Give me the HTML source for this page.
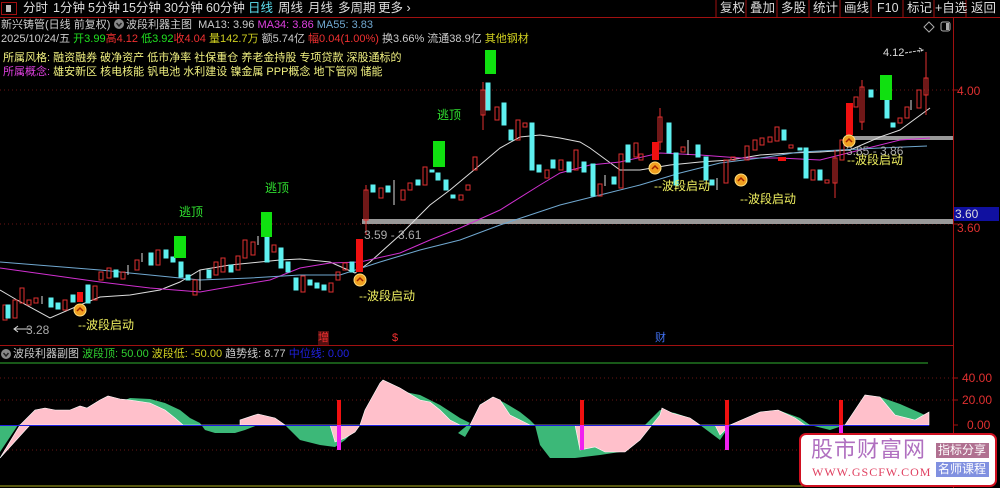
<!DOCTYPE html>
<html><head><meta charset="utf-8"><style>
body{margin:0;background:#000;width:1000px;height:488px;overflow:hidden;font-family:"Liberation Sans","Noto Sans CJK SC",sans-serif;}
svg{position:absolute;left:0;top:0}
.t{position:absolute;white-space:nowrap;font-size:12px;line-height:14px}
.s{font-size:11px}
.tb{position:absolute;top:0;height:17px;font-size:12.5px;color:#ddd;line-height:17px}
</style></head><body>
<svg width="1000" height="488" viewBox="0 0 1000 488">
<line x1="0" y1="17.5" x2="1000" y2="17.5" stroke="#a01010"/>
<line x1="953.5" y1="17" x2="953.5" y2="488" stroke="#a01010"/>
<line x1="0" y1="345.5" x2="953" y2="345.5" stroke="#a01010"/>
<g stroke="#a01010" fill="none">
<rect x="1.5" y="2.5" width="15" height="12"/>
<line x1="716" y1="0" x2="716" y2="17"/><line x1="746" y1="0" x2="746" y2="17"/><line x1="777" y1="0" x2="777" y2="17"/><line x1="809" y1="0" x2="809" y2="17"/><line x1="840" y1="0" x2="840" y2="17"/><line x1="871" y1="0" x2="871" y2="17"/><line x1="903" y1="0" x2="903" y2="17"/><line x1="934" y1="0" x2="934" y2="17"/><line x1="966" y1="0" x2="966" y2="17"/>
</g>
<rect x="6" y="5" width="5" height="7" fill="#bbb"/>
<path d="M929 22 L934 27 L929 32 L924 27 Z" stroke="#aaa" fill="none"/>
<rect x="941" y="22" width="9" height="9" rx="2" stroke="#aaa" fill="none"/><rect x="946" y="23" width="3" height="7" fill="#aaa"/>
<g stroke="#6a1515" stroke-dasharray="1,3">
<line x1="0" y1="90" x2="953" y2="90"/><line x1="0" y1="224" x2="953" y2="224"/>
<line x1="0" y1="378" x2="953" y2="378"/><line x1="0" y1="400" x2="953" y2="400"/><line x1="0" y1="450" x2="953" y2="450"/>
</g>
<g stroke="#a01010"><line x1="953" y1="90" x2="958" y2="90"/><line x1="953" y1="224" x2="958" y2="224"/><line x1="953" y1="378" x2="958" y2="378"/><line x1="953" y1="400" x2="958" y2="400"/><line x1="953" y1="425" x2="958" y2="425"/></g>
<rect x="954" y="207" width="45" height="14" fill="#1010a0"/>
<rect x="362" y="219" width="591" height="5" fill="#999"/>
<rect x="848" y="136" width="105" height="4" fill="#999"/>
<polyline fill="none" stroke="#ddd" stroke-width="1" points="0,290 17,300 50,318 80,305 100,297 130,295 160,290 180,282 200,270 230,265 260,262 280,260 300,259 330,262 355,273 370,262 400,235 430,205 450,190 480,165 500,148 520,137 540,135 560,138 580,142 590,148 620,170 640,170 670,165 700,162 730,160 760,155 790,153 820,152 850,150 880,137 900,130 930,108"/>
<polyline fill="none" stroke="#d030d0" stroke-width="1" points="0,268 50,275 100,282 150,288 200,292 240,285 270,280 300,268 330,263 360,262 400,253 430,240 460,228 500,210 540,185 560,173 590,165 620,162 660,153 700,155 740,158 780,158 820,160 860,150 900,140 930,138"/>
<polyline fill="none" stroke="#70a8d0" stroke-width="1" points="0,262 50,266 100,270 150,275 200,280 250,278 300,275 340,275 380,262 420,250 460,240 500,225 530,215 560,205 600,195 640,185 680,173 720,163 760,158 800,152 840,150 880,148 927,146"/>
<g stroke="#e03030" fill="none" stroke-width="1">
<rect x="3" y="305" width="4" height="15"/><rect x="13" y="300" width="4" height="18"/><rect x="20" y="288" width="4" height="15"/><rect x="27" y="300" width="4" height="5"/><rect x="34" y="298" width="4" height="5"/><rect x="63" y="300" width="4" height="10"/><rect x="93" y="286" width="4" height="14"/><rect x="99" y="272" width="4" height="8"/><rect x="107" y="268" width="4" height="10"/><rect x="121" y="272" width="4" height="7"/><rect x="135" y="260" width="4" height="10"/><rect x="156" y="250" width="4" height="15"/><rect x="193" y="280" width="4" height="15"/><rect x="214" y="262" width="4" height="13"/><rect x="221" y="258" width="4" height="14"/><rect x="236" y="256" width="4" height="14"/><rect x="243" y="240" width="4" height="18"/><rect x="251" y="242" width="4" height="13"/><rect x="272" y="245" width="4" height="7"/><rect x="301" y="276" width="4" height="16"/><rect x="329" y="283" width="4" height="9"/><rect x="336" y="272" width="4" height="8"/><rect x="343" y="263" width="4" height="7"/><rect x="364" y="190" width="4" height="30"/><rect x="379" y="188" width="4" height="10"/><rect x="401" y="190" width="4" height="10"/><rect x="408" y="183" width="4" height="7"/><rect x="423" y="167" width="4" height="18"/><rect x="459" y="195" width="4" height="5"/><rect x="466" y="185" width="4" height="5"/><rect x="473" y="157" width="4" height="13"/><rect x="481" y="90" width="4" height="25"/><rect x="495" y="107" width="4" height="13"/><rect x="516" y="120" width="4" height="20"/><rect x="523" y="123" width="4" height="4"/><rect x="545" y="170" width="4" height="8"/><rect x="559" y="160" width="4" height="10"/><rect x="574" y="150" width="4" height="20"/><rect x="598" y="184" width="4" height="12"/><rect x="619" y="154" width="4" height="34"/><rect x="634" y="143" width="4" height="14"/><rect x="639" y="154" width="4" height="6"/><rect x="658" y="117" width="4" height="25"/><rect x="681" y="147" width="4" height="5"/><rect x="724" y="160" width="4" height="23"/><rect x="731" y="157" width="4" height="3"/><rect x="745" y="146" width="4" height="14"/><rect x="753" y="140" width="4" height="10"/><rect x="760" y="138" width="4" height="7"/><rect x="768" y="137" width="4" height="5"/><rect x="775" y="127" width="4" height="14"/><rect x="789" y="145" width="4" height="3"/><rect x="811" y="170" width="4" height="10"/><rect x="825" y="180" width="4" height="3"/><rect x="833" y="158" width="4" height="25"/><rect x="840" y="140" width="4" height="20"/><rect x="854" y="97" width="4" height="10"/><rect x="860" y="87" width="4" height="35"/><rect x="898" y="118" width="4" height="5"/><rect x="905" y="107" width="4" height="11"/><rect x="917" y="90" width="4" height="18"/><rect x="924" y="78" width="4" height="17"/>
<line x1="926" y1="52" x2="926" y2="115"/><line x1="862" y1="80" x2="862" y2="130"/><line x1="366" y1="185" x2="366" y2="235"/><line x1="483" y1="82" x2="483" y2="130"/><line x1="660" y1="108" x2="660" y2="150"/><line x1="835" y1="150" x2="835" y2="198"/>
</g>
<g fill="#5ef0f0" stroke="#5ef0f0">
<rect x="6" y="305" width="4" height="13"/><rect x="49" y="298" width="4" height="9"/><rect x="56" y="303" width="4" height="6"/><rect x="71" y="295" width="4" height="7"/><rect x="86" y="285" width="4" height="18"/><rect x="114" y="270" width="4" height="7"/><rect x="149" y="253" width="4" height="12"/><rect x="164" y="250" width="4" height="8"/><rect x="171" y="257" width="4" height="5"/><rect x="179" y="262" width="4" height="15"/><rect x="186" y="275" width="4" height="5"/><rect x="207" y="270" width="4" height="8"/><rect x="229" y="265" width="4" height="7"/><rect x="265" y="237" width="4" height="25"/><rect x="279" y="248" width="4" height="20"/><rect x="286" y="262" width="4" height="10"/><rect x="294" y="278" width="4" height="12"/><rect x="308" y="280" width="4" height="5"/><rect x="315" y="283" width="4" height="5"/><rect x="322" y="285" width="4" height="5"/><rect x="350" y="262" width="4" height="10"/><rect x="371" y="185" width="4" height="7"/><rect x="386" y="186" width="4" height="6"/><rect x="416" y="180" width="4" height="5"/><rect x="430" y="170" width="4" height="2"/><rect x="436" y="173" width="4" height="7"/><rect x="444" y="180" width="4" height="10"/><rect x="451" y="195" width="4" height="3"/><rect x="486" y="83" width="4" height="27"/><rect x="502" y="103" width="4" height="22"/><rect x="509" y="130" width="4" height="10"/><rect x="530" y="123" width="4" height="47"/><rect x="537" y="165" width="4" height="7"/><rect x="551" y="160" width="4" height="8"/><rect x="567" y="162" width="4" height="10"/><rect x="582" y="162" width="4" height="10"/><rect x="591" y="164" width="4" height="32"/><rect x="612" y="177" width="4" height="7"/><rect x="626" y="145" width="4" height="17"/><rect x="667" y="123" width="4" height="30"/><rect x="674" y="153" width="4" height="32"/><rect x="696" y="145" width="4" height="12"/><rect x="704" y="157" width="4" height="23"/><rect x="710" y="180" width="4" height="5"/><rect x="782" y="130" width="4" height="10"/><rect x="798" y="148" width="4" height="2"/><rect x="804" y="148" width="4" height="30"/><rect x="818" y="170" width="4" height="10"/><rect x="869" y="90" width="4" height="7"/><rect x="885" y="100" width="4" height="18"/><rect x="891" y="123" width="4" height="4"/>
</g>
<g stroke="#ddd"><line x1="42" y1="296" x2="42" y2="304"/><line x1="128" y1="265" x2="128" y2="275"/><line x1="142" y1="253" x2="142" y2="262"/><line x1="200" y1="270" x2="200" y2="290"/><line x1="258" y1="236" x2="258" y2="245"/><line x1="394" y1="180" x2="394" y2="205"/><line x1="605" y1="175" x2="605" y2="186"/><line x1="688" y1="140" x2="688" y2="155"/><line x1="717" y1="178" x2="717" y2="190"/><line x1="911" y1="100" x2="911" y2="110"/></g>
<g fill="#10e010"><rect x="174" y="236" width="12" height="22"/><rect x="261" y="212" width="11" height="25"/><rect x="433" y="141" width="12" height="26"/><rect x="485" y="50" width="11" height="24"/><rect x="880" y="75" width="12" height="25"/></g>
<g fill="#f01010"><rect x="77" y="292" width="6" height="10"/><rect x="356" y="239" width="7" height="33"/><rect x="652" y="142" width="7" height="18"/><rect x="778" y="157" width="8" height="4"/><rect x="846" y="103" width="7" height="32"/></g>
<g>
<circle cx="80" cy="310" r="6" fill="#f0a020" stroke="#ffe080"/><circle cx="360" cy="280" r="6" fill="#f0a020" stroke="#ffe080"/><circle cx="655" cy="168" r="6" fill="#f0a020" stroke="#ffe080"/><circle cx="741" cy="180" r="6" fill="#f0a020" stroke="#ffe080"/><circle cx="849" cy="141" r="6" fill="#f0a020" stroke="#ffe080"/>
</g>
<g stroke="#a02000" stroke-width="1.5" fill="none"><path d="M77 311 L80 308 L83 311"/><path d="M357 281 L360 278 L363 281"/><path d="M652 169 L655 166 L658 169"/><path d="M738 181 L741 178 L744 181"/><path d="M846 142 L849 139 L852 142"/></g>
<path d="M905 53 L923 50 M919 48 L923 50 L919 52" stroke="#ddd" fill="none" stroke-dasharray="3,1"/>
<path d="M15 329 L30 329 M18 326 L14 329 L18 332" stroke="#ddd" fill="none"/>
<line x1="0" y1="363" x2="928" y2="363" stroke="#30b030"/>
<line x1="0" y1="486" x2="953" y2="486" stroke="#b0b020"/>
<polygon fill="#3cb878" points="0,425 0,452 18,425 125,400 130,398 150,399 165,403 180,410 190,418 200,423 205,430 215,433 235,433 245,430 258,425 285,425 290,430 300,440 320,445 335,447 345,440 360,425 383,380 400,388 405,392 420,395 440,405 460,418 470,423 458,433 465,437 472,425 480,405 493,397 505,403 520,412 530,420 535,425 540,445 550,458 575,458 600,455 620,452 640,430 660,410 675,413 690,418 700,425 720,440 730,425 760,412 778,410 800,418 810,425 830,430 845,425 865,395 880,397 900,404 925,415 929,413 929,425"/>
<polygon fill="#ffc0cb" stroke="#fff" stroke-width="0.6" points="0,458 20,425 35,410 45,408 55,410 70,410 80,406 87,408 100,400 108,396 120,399 130,400 150,403 165,410 175,418 183,425 240,425 240,420 258,414 275,418 285,425 330,425 335,442 345,438 355,432 360,425 365,410 380,383 383,380 400,388 420,400 430,402 440,410 450,420 460,425 470,425 480,405 493,397 500,400 510,415 520,420 530,425 575,425 580,450 595,447 605,452 625,452 640,440 660,415 662,408 672,413 690,418 700,425 715,425 720,435 730,425 760,412 778,410 795,418 805,425 845,425 865,395 880,397 895,415 915,420 929,412 929,425 30,425"/>
<line x1="0" y1="425.5" x2="929" y2="425.5" stroke="#2020e0"/>
<g><rect x="337" y="400" width="4" height="25" fill="#f01010"/><rect x="337" y="425" width="4" height="25" fill="#f020f0"/>
<rect x="580" y="400" width="4" height="25" fill="#f01010"/><rect x="580" y="425" width="4" height="25" fill="#f020f0"/>
<rect x="725" y="400" width="4" height="25" fill="#f01010"/><rect x="725" y="425" width="4" height="25" fill="#f020f0"/>
<rect x="839" y="400" width="4" height="25" fill="#f01010"/><rect x="839" y="425" width="4" height="8" fill="#f020f0"/></g>
<circle cx="6" cy="354" r="5" fill="#888"/><path d="M3.5 353 L6 356 L8.5 353" stroke="#222" fill="none" stroke-width="1.5"/>
<circle cx="119" cy="24" r="5" fill="#888"/><path d="M116.5 23 L119 26 L121.5 23" stroke="#222" fill="none" stroke-width="1.5"/>
<rect x="800" y="434" width="196" height="52" rx="6" fill="#fff" stroke="#d01020" stroke-width="2"/>
<rect x="936" y="443" width="53" height="15" fill="#b07090"/><rect x="936" y="462" width="53" height="15" fill="#8090e0"/>
</svg>
<div class="tb" style="left:23px">分时</div>
<div class="tb" style="left:53px">1分钟</div>
<div class="tb" style="left:88px">5分钟</div>
<div class="tb" style="left:122px">15分钟</div>
<div class="tb" style="left:164px">30分钟</div>
<div class="tb" style="left:206px">60分钟</div>
<div class="tb" style="left:248px;color:#5ee0f0">日线</div>
<div class="tb" style="left:278px">周线</div>
<div class="tb" style="left:308px">月线</div>
<div class="tb" style="left:338px">多周期</div>
<div class="tb" style="left:378px">更多 ›</div>
<div class="tb" style="left:720px">复权</div><div class="tb" style="left:750px">叠加</div><div class="tb" style="left:781px">多股</div><div class="tb" style="left:813px">统计</div><div class="tb" style="left:844px">画线</div><div class="tb" style="left:877px">F10</div><div class="tb" style="left:907px">标记</div><div class="tb" style="left:935px">+自选</div><div class="tb" style="left:971px">返回</div>
<div class="t s" style="left:1px;top:18px;color:#ccc">新兴铸管(日线 前复权)</div>
<div class="t s" style="left:126px;top:18px;color:#ccc">波段利器主图 &nbsp;MA13: 3.96 <span style="color:#e040e0">MA34: 3.86</span> <span style="color:#70a8d0">MA55: 3.83</span></div>
<div class="t s" style="left:1px;top:32px;color:#ccc">2025/10/24/五 <span style="color:#20e020">开3.99</span><span style="color:#f03030">高4.12</span> <span style="color:#20e020">低3.92</span><span style="color:#f03030">收4.04</span> <span style="color:#d0d020">量142.7万</span> 额5.74亿 <span style="color:#f03030">幅0.04(1.00%)</span> 换3.66% 流通38.9亿 <span style="color:#d0d020">其他钢材</span></div>
<div class="t s" style="left:3px;top:51px;color:#f0f080">所属风格: 融资融券 破净资产 低市净率 社保重仓 养老金持股 专项贷款 深股通标的</div>
<div class="t s" style="left:3px;top:65px;color:#f0f080"><span style="color:#e040e0">所属概念:</span> 雄安新区 核电核能 钒电池 水利建设 镍金属 PPP概念 地下管网 储能</div>
<div class="t" style="left:179px;top:205px;color:#30e030">逃顶</div>
<div class="t" style="left:265px;top:181px;color:#30e030">逃顶</div>
<div class="t" style="left:437px;top:108px;color:#30e030">逃顶</div>
<div class="t" style="left:883px;top:46px;color:#ddd;font-size:11px">4.12</div>
<div class="t" style="left:26px;top:323px;color:#aaa">3.28</div>
<div class="t" style="left:364px;top:228px;color:#aaa">3.59 - 3.61</div>
<div class="t" style="left:846px;top:144px;color:#aaa">3.85 - 3.86</div>
<div class="t" style="left:78px;top:318px;color:#f0f060">--波段启动</div>
<div class="t" style="left:359px;top:289px;color:#f0f060">--波段启动</div>
<div class="t" style="left:654px;top:179px;color:#f0f060">--波段启动</div>
<div class="t" style="left:740px;top:192px;color:#f0f060">--波段启动</div>
<div class="t" style="left:847px;top:153px;color:#f0f060">--波段启动</div>
<div class="t" style="left:957px;top:84px;color:#e03030">4.00</div>
<div class="t" style="left:955px;top:207px;color:#ddd">3.60</div>
<div class="t" style="left:957px;top:221px;color:#e03030">3.60</div>
<div class="t" style="left:318px;top:331px;color:#f03030;background:#501010;font-size:11px">增</div>
<div class="t" style="left:392px;top:331px;color:#f03030;font-size:11px">$</div>
<div class="t" style="left:655px;top:331px;color:#4070f0;font-size:11px">财</div>
<div class="t s" style="left:13px;top:347px;color:#ccc">波段利器副图 <span style="color:#30d030">波段顶: 50.00</span> <span style="color:#d0d020">波段低: -50.00</span> 趋势线: 8.77 <span style="color:#2020e0">中位线: 0.00</span></div>
<div class="t" style="left:962px;top:371px;color:#e03030">40.00</div>
<div class="t" style="left:962px;top:393px;color:#e03030">20.00</div>
<div class="t" style="left:967px;top:418px;color:#e03030">0.00</div>
<div class="t" style="left:811px;top:438px;color:#b070c0;font-size:22px;line-height:24px;letter-spacing:1px">股市财富网</div>
<div class="t" style="left:812px;top:465px;color:#e04060;font-size:12px;font-family:'Liberation Serif',serif;letter-spacing:1px">WWW.GSCFW.COM</div>
<div class="t" style="left:938px;top:443px;color:#fff;font-size:12px;line-height:15px">指标分享</div>
<div class="t" style="left:938px;top:462px;color:#fff;font-size:12px;line-height:15px">名师课程</div>
</body></html>
